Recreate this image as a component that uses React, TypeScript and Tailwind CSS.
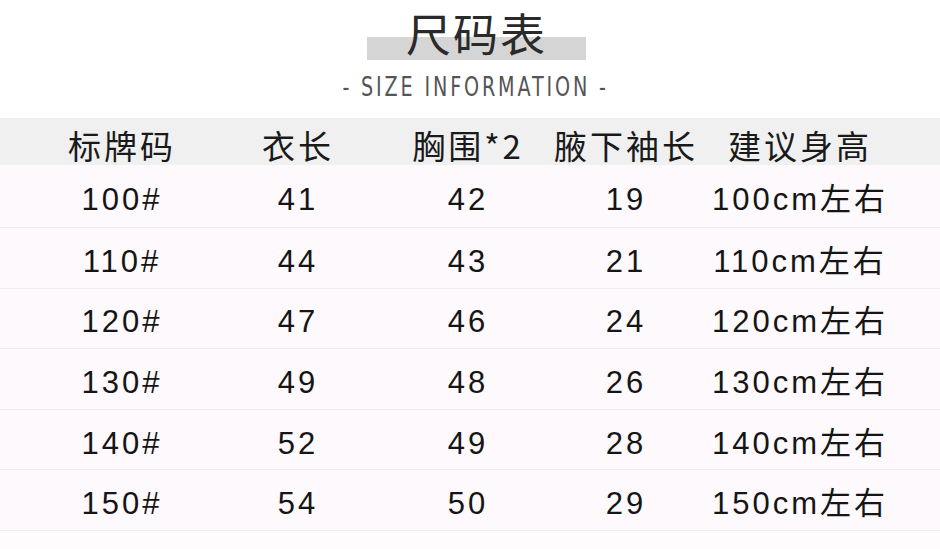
import React from "react";

const rows = [
  ["100#", "41", "42", "19", "100cm左右"],
  ["110#", "44", "43", "21", "110cm左右"],
  ["120#", "47", "46", "24", "120cm左右"],
  ["130#", "49", "48", "26", "130cm左右"],
  ["140#", "52", "49", "28", "140cm左右"],
  ["150#", "54", "50", "29", "150cm左右"],
];

const headers = ["标牌码", "衣长", "胸围*2", "腋下袖长", "建议身高"];

const grid = "grid grid-cols-[184px_168px_172px_144px_204px] pl-[30px]";

export default function App() {
  return (
    <div className="w-[940px] h-[549px] overflow-hidden bg-[#fefcfd] flex flex-col">
      <div className="h-[118px] shrink-0 bg-white flex flex-col items-center">
        <div className="relative mt-[8px] h-[50px] w-[219px] ml-[13px] flex justify-center">
          <div className="absolute left-0 top-[29px] w-[219px] h-[23px] bg-[#d5d5d5]" />
          <span className="relative text-[45px] leading-[50px] text-[#2a2a2a] tracking-[2px] [font-family:'Noto_Sans_CJK_SC',sans-serif]">
            尺码表
          </span>
        </div>
        <div className="mt-[16px] h-[26px] ml-[12px] flex items-center justify-center text-[#555] [font-family:'DejaVu_Sans',sans-serif]">
          <span className="inline-block text-[27px] leading-[26px] tracking-[4px] scale-x-[0.71] whitespace-nowrap">
            - SIZE INFORMATION -
          </span>
        </div>
      </div>
      <div className={`${grid} h-[47px] shrink-0 bg-[#f0f0f0] items-center pt-[6px]`}>
        {headers.map((h) => (
          <div
            key={h}
            className="text-center whitespace-nowrap flex justify-center text-[33px] leading-[38px] tracking-[3px] text-[#1a1a1a] [font-family:'Noto_Sans_CJK_SC',sans-serif]"
          >
            {h}
          </div>
        ))}
      </div>
      {rows.map((r, idx) => (
        <div
          key={r[0]}
          className={`${grid} shrink-0 ${idx === 0 ? "h-[63px]" : "h-[60.6px]"} items-center pt-[8px] border-b border-[#f1ecef] bg-[#fdf9fc]`}
        >
          {r.map((c, i) => (
            <div
              key={i}
              className="text-center whitespace-nowrap text-[31px] leading-[36px] tracking-[3px] text-[#151515] [font-family:'Liberation_Sans','Noto_Sans_CJK_SC',sans-serif]"
            >
              {c}
            </div>
          ))}
        </div>
      ))}
    </div>
  );
}
